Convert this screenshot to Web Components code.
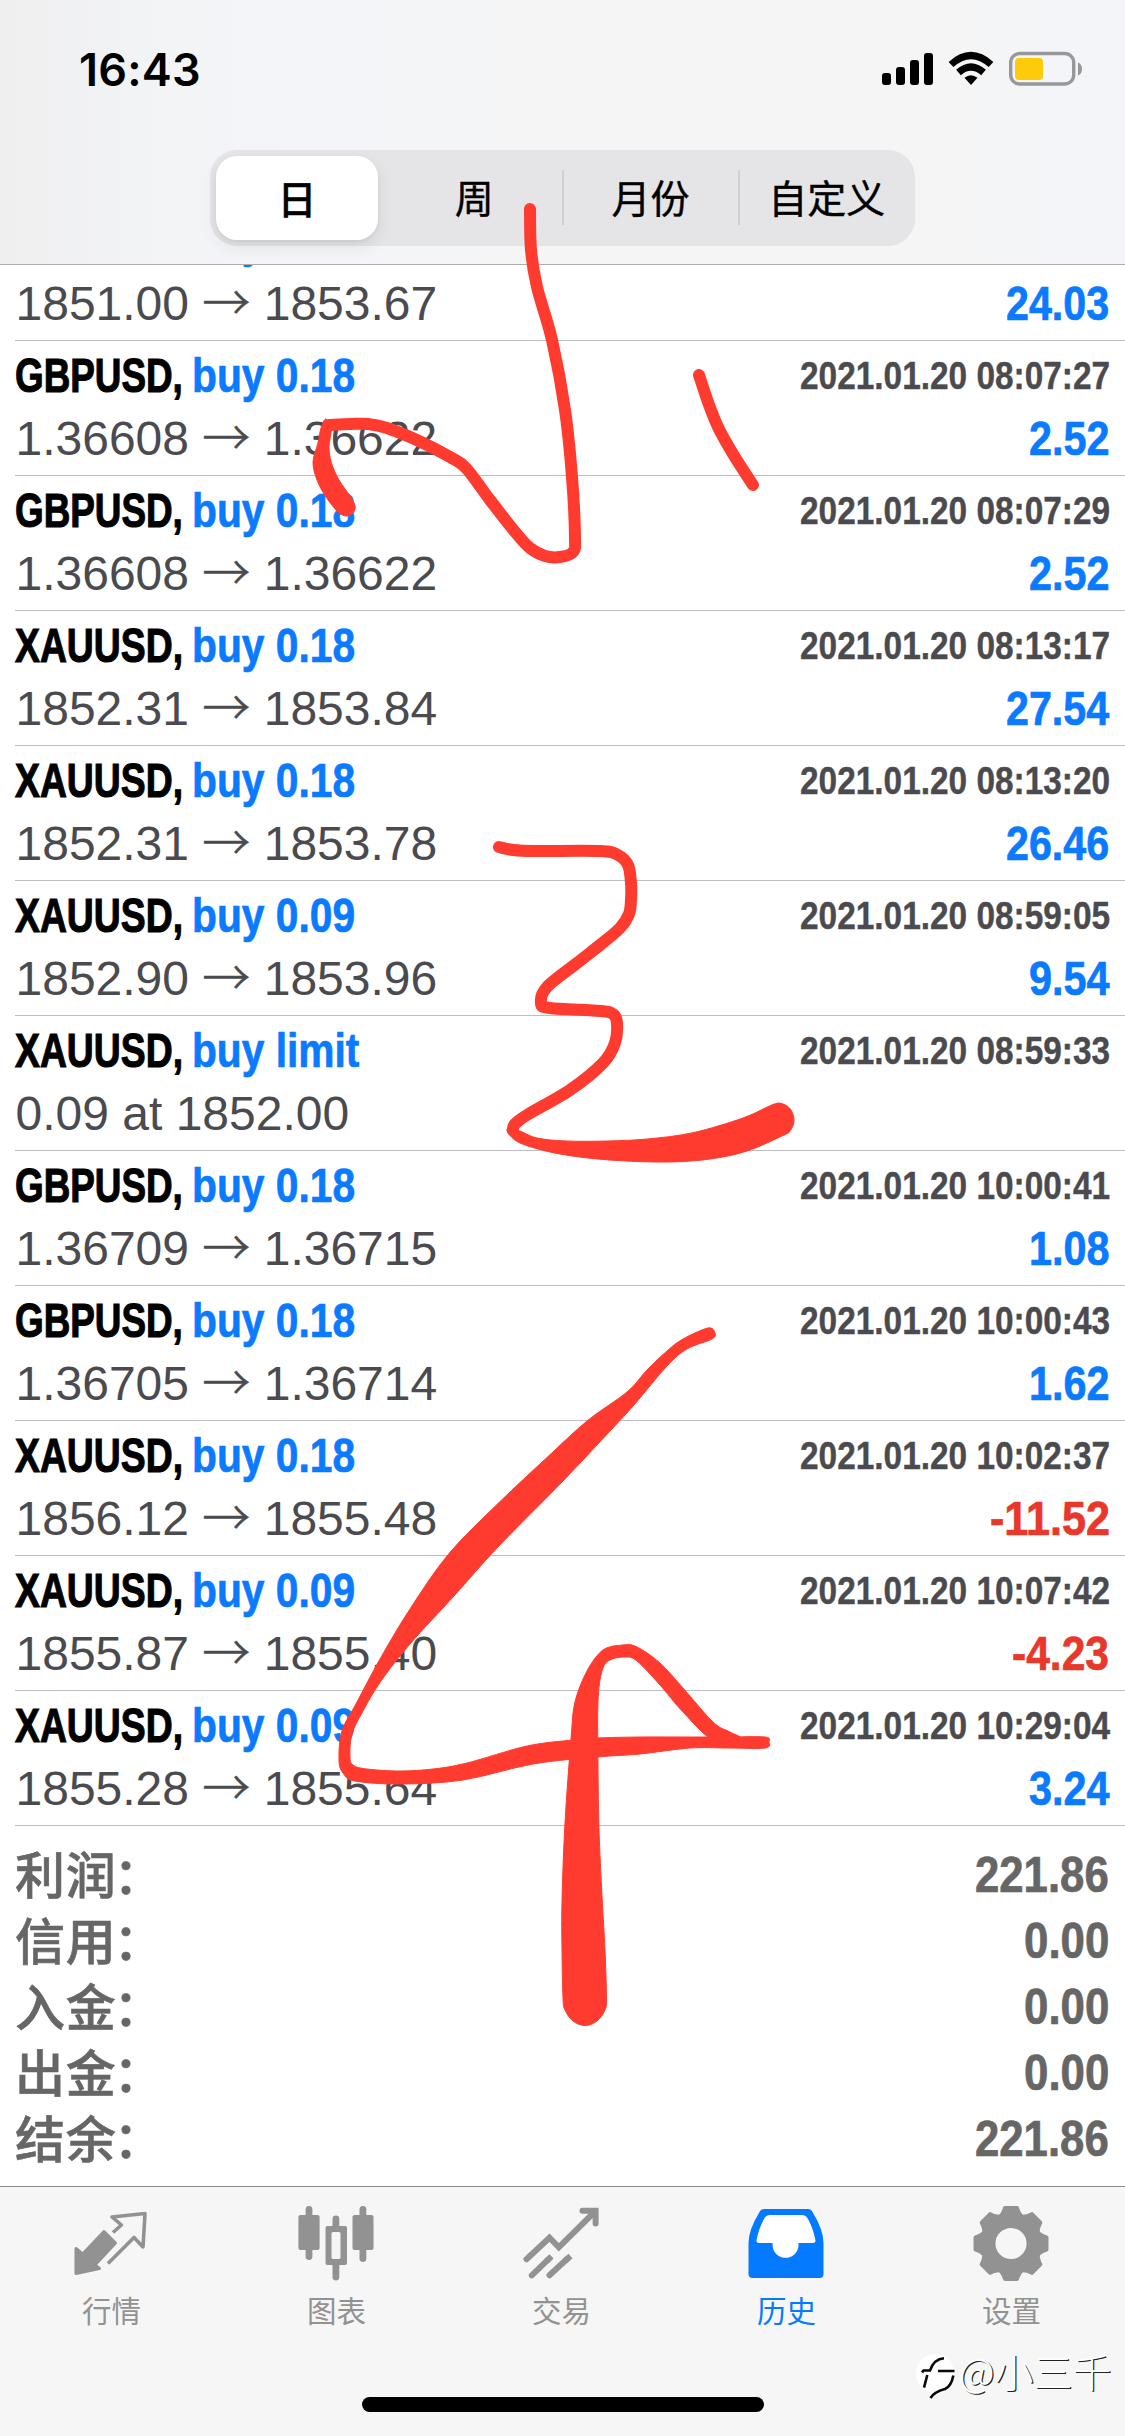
<!DOCTYPE html>
<html lang="zh-CN">
<head>
<meta charset="utf-8">
<title>历史</title>
<style>
html,body{margin:0;background:#fff}
body{width:1125px;height:2436px;overflow:hidden;font-family:"Liberation Sans","Noto Sans CJK SC",sans-serif}
</style>
</head>
<body>
<history-app></history-app>
<script>
const def = (name, html, setup) => customElements.define(name, class extends HTMLElement {
  constructor() { super(); this.attachShadow({ mode: 'open' }); }
  connectedCallback() {
    this.shadowRoot.innerHTML = typeof html === 'function' ? html(this) : html;
    if (setup) setup(this, this.shadowRoot);
  }
});

// Condensed text: squeezes its content horizontally to the width given in "w".
def('fit-text', el => `<style>
:host{display:block;flex:none;width:${el.getAttribute('w')}px;white-space:pre;font-kerning:none}
span{display:inline-block;transform-origin:0 50%;-webkit-text-stroke:var(--ink,.7px) currentColor}
</style><span>${el.getAttribute('text')}</span>`, (el, root) => {
  const s = root.querySelector('span');
  s.style.transform = `scaleX(${el.getAttribute('w') / s.offsetWidth})`;
});

def('status-bar', `<style>
:host{display:flex;height:136px;padding:0 42px 0 79px;align-items:center;justify-content:space-between;box-sizing:border-box}
b{font:600 45px/56px Inter,sans-serif;letter-spacing:.2px;color:#000;display:block;margin-top:3px}
svg{display:block;margin-top:2px}
</style><b>16:43</b>
<svg width="202" height="36" viewBox="881 51 202 36">
<rect x="882" y="73" width="9" height="12" rx="3"/><rect x="896" y="67" width="9" height="18" rx="3"/><rect x="910" y="60" width="9" height="25" rx="3"/><rect x="924" y="53" width="9" height="32" rx="3"/>
<g fill="none" stroke="#000" stroke-width="7"><path d="M951 64.500Q971 46.500 991 64.500"/><path d="M958.500 72.500Q971 61.500 983.500 72.500"/></g>
<path d="M964.500 77.800Q971 72.500 977.500 77.800L971 85Z"/>
<rect x="1010.700" y="53.500" width="63" height="30.500" rx="9" fill="none" stroke="#98989b" stroke-width="3.400"/>
<rect x="1015" y="58" width="28" height="22" rx="4" fill="#fecb0b"/><path d="M1078 62.500Q1082 64 1082 69Q1082 74 1078 75.500Z" fill="#98989b"/>
</svg>`);

def('period-tab', `<style>
:host{display:flex;flex:1;align-items:center;justify-content:center;font:400 39px/56px "Noto Sans CJK SC",sans-serif;color:#000;position:relative}
:host([sep])::before{content:"";position:absolute;left:-1px;top:20px;height:55px;width:2px;background:#cfcfd3}
div{padding-bottom:4px;-webkit-text-stroke:.4px #000}
:host([on]) div{display:flex;align-items:center;justify-content:center;width:162px;height:82px;padding:0 0 2px;background:#fff;border-radius:21px;box-shadow:0 7px 18px rgba(0,0,0,.08),0 2px 4px rgba(0,0,0,.06);margin:0 8px 0 6px;font-weight:500}
</style><div><slot></slot></div>`);

def('period-picker', `<style>
:host{display:flex;width:705px;height:96px;margin:14px 0 0 210px;border-radius:27px;background:#e5e5e7}
</style><slot></slot>`);

def('top-bar', `<style>
:host{display:block;height:265px;border-bottom:1px solid #aeaeb2;box-sizing:border-box;background:linear-gradient(90deg,#efeff0 0,#f3f4f6 170px,#f4f5f9 300px,#f5f5f6 520px,#f5f5f6 960px,#f4f5fa 1125px)}
</style><slot></slot>`);

const glyph = { '.': 11.4, '-': 16.5 };
const valueWidth = v => [...v].reduce((t, c) => t + (glyph[c] || 22.9), 0);

def('deal-row', el => {
  const a = n => el.getAttribute(n) || '';
  return `<style>
:host{display:block;flex:none;height:135px;margin-left:15px;padding-right:15px;box-sizing:border-box;border-bottom:1px solid #bdbdc0}
div{display:flex;justify-content:space-between;align-items:center;line-height:56px}
.top{height:67px;padding-top:2px;box-sizing:border-box}
.bottom{height:62px}
.n{display:flex;gap:9px;font:bold 48px/56px "Liberation Sans",sans-serif}
.s{color:#000;--ink:1.100px}.b{color:#0a7aff}
.t{color:#4a4a4f;font:bold 39px/50px "Liberation Sans",sans-serif;--ink:.4px}
.p{font-size:48px;color:#4a4a4f;white-space:pre;padding-left:.5px}
.p i{font:300 48px/40px "Noto Sans CJK SC";letter-spacing:0;-webkit-text-stroke:.5px currentColor}
.v{color:#0a7aff;margin-right:1px}.v.neg{color:#e8382b}
</style>
<div class="top"><span class="n"><fit-text class="s" w="168" text="${a('symbol')},"></fit-text><fit-text class="b" w="${a('side') === 'buy limit' ? 167 : 163}" text="${a('side')}"></fit-text></span>${a('time') && `<fit-text class="t" w="310" text="${a('time')}"></fit-text>`}</div>
<div class="bottom"><span class="p">${a('price').replace('→', '<i>→</i>')}</span>${a('value') && `<fit-text class="n v ${a('value')[0] === '-' ? 'neg' : ''}" w="${valueWidth(a('value'))}" text="${a('value')}"></fit-text>`}</div>`;
});

def('sum-row', el => `<style>
:host{display:flex;height:66px;padding:0 16px 0 15px;justify-content:space-between;align-items:center;color:#666}
span{font:500 50px/66px "Noto Sans CJK SC",sans-serif;letter-spacing:.8px;margin-top:-7px;-webkit-text-stroke:.6px currentColor}
i{font-style:normal;margin-left:-3px}
fit-text{font:bold 50px/66px "Liberation Sans",sans-serif}
</style><span><slot></slot><i>：</i></span><fit-text w="${valueWidth(el.getAttribute('value')) * 1.0625}" text="${el.getAttribute('value')}"></fit-text>`);

def('tab-item', `<style>
:host{display:flex;flex:1;flex-direction:column;align-items:center;color:#929292;font:400 29.500px/40px "Noto Sans CJK SC",sans-serif}
:host([on]){color:#047aff}
slot[name=icon]{display:block;height:89px;margin-left:1px}
</style><slot name="icon"></slot><span><slot></slot></span>`);

def('tab-bar', `<style>
:host{display:flex;flex-direction:column;height:250px;border-top:1px solid #8c8c8e;box-sizing:border-box;background:#f6f6f6;padding-top:13px}
.tabs{display:flex;height:197px;width:1125px;margin-left:-1px}
.home{width:402px;height:15px;border-radius:8px;background:#000;margin-left:362px}
</style><div class="tabs"><slot></slot></div><div class="home"></div>`);

// Smooth curve through points (Catmull-Rom converted to cubic Beziers).
const curve = (s, closed) => {
  const p = s.trim().split(/\s+/).map(q => q.split(',').map(Number)), n = p.length;
  const at = i => closed ? p[(i + n) % n] : p[Math.max(0, Math.min(n - 1, i))];
  let d = 'M' + p[0];
  for (let i = 0; i < (closed ? n : n - 1); i++) {
    const [a, b, c, e] = [at(i - 1), at(i), at(i + 1), at(i + 2)];
    d += `C${b[0] + (c[0] - a[0]) / 6},${b[1] + (c[1] - a[1]) / 6} ${c[0] - (e[0] - b[0]) / 6},${c[1] - (e[1] - b[1]) / 6} ${c}`;
  }
  return d + (closed ? 'Z' : '');
};
const pens = [
  '530,209 531,250 537,287 552,340 565,410 572,477 575,537 573,552 560,557 545,556 530,548 516,533 490,500 466,468 450,457 419,441 387,428 368,424 351,424 329,425',
  '699,375 708,402 718,427 733,454 753,485',
  '499,847 513,850 535,851 600,851 618,855 628,865 631,883 631,900 629,914 620,928 600,945 577,963 547,987 541,1003 550,1008 600,1011 613,1014 617,1023 615,1043 603,1063 570,1090 527,1115 515,1124 512.700,1130'
];
const fills = [
  '326,419 321,428 318,443 313,462 317,480 326,497 338,512 346,516 353,513 355,506 350,496 339,480 331.500,463 329,447 331,430',
  '507,1130 520,1143 560,1154 610,1160 667,1162 710,1159 747,1151 783,1135.500 790,1131 794,1121 791,1110 783,1104 773,1104.500 743,1118 693,1132.700 647,1139 607,1141 567,1141 537,1138 519,1130.700',
  '708,1328 683,1339 667,1351 647,1370 627,1392 587,1421 547,1457.500 499,1502.600 449,1553.500 410,1609 380,1659 357,1702 342,1731 339,1760 343,1773 355,1781 400,1784 463,1780 533,1764 597,1757 640,1754 690,1748 727,1748 765,1748 769,1742 765,1737 727,1737 690,1737 640,1737 597,1738 573,1740 527,1746 467,1763 433,1769 400,1771 367,1769 353,1765 350,1756 352,1734 363,1711 381,1681 410,1644 454,1596 498,1547 563,1481 611,1430 634,1405 667,1366 687,1349 712,1339 715,1333',
  '562,1950 563,1998 565,2010 573,2021 585,2025.500 597,2021 605,2010 606.500,1998 605,1950 602,1896 599,1830 598,1765 598,1702 602,1671 610,1660 625,1657 637,1661 660,1685 683,1712 713,1740 740,1738 730,1732 713,1722 683,1688 660,1663 637,1647 623,1645 603,1650 587,1671 575,1702 571,1739 565,1823 562,1901'
];
def('ink-layer', `<style>:host{position:absolute;left:0;top:0;pointer-events:none}svg{display:block}</style>
<svg width="1125" height="2436">${pens.map(s => `<path d="${curve(s)}" fill="none" stroke="#ff3b30" stroke-width="12" stroke-linecap="round" stroke-linejoin="round"/>`).join('')}${fills.map(s => `<path d="${curve(s, true)}" fill="#ff3b30" stroke="#ff3b30" stroke-width="1" stroke-linejoin="round"/>`).join('')}</svg>`);

def('author-mark', `<style>
:host{position:absolute;left:914px;top:2347px;display:flex;align-items:center;color:#fff;font:300 39px/50px "Noto Sans CJK SC",sans-serif}
svg{display:block;margin-right:1px}
span{text-shadow:1.200px 1.200px 0 #222;margin-top:-9px}
</style><svg width="44" height="54" viewBox="0 0 44 54"><path d="M21 7A19 19 0 0 1 40 26Q39 42 28 46L16 53V45Q2 41 2 26A19 19 0 0 1 21 7Z" fill="#fff"/>
<g fill="none" stroke="#0a0a0a" stroke-width="2.600"><path d="M8 25.500L9.500 23.500H16Q20 12 30 11.300M13.300 28L10 40.700"/><path d="M24 24H40.500M39.300 28.500Q37.500 39 31 42Q20 45 16.500 51"/></g></svg><span>@小三千</span>`);

const teeth = Array.from({ length: 8 }, (_, i) => `<path transform="rotate(${i * 45})" d="M-12 -26Q-8 -29 -6 -35.500H6Q8 -29 12 -26Z"/>`).join('');
const icons = {
  quotes: `<g stroke-linejoin="round" stroke="currentColor"><path fill="currentColor" stroke-width="3" d="M34 31.500L45.500 43L25 65L29.500 68.500L6 73.500V48.500L12.700 54Z"/><path fill="none" stroke-width="3.600" d="M43 32.500L51.400 25L42 17L75 13.500L73 47L64 37.500L38 63.500"/></g>`,
  chart: `<g fill="currentColor"><rect x="3.400" y="15" width="21.200" height="35" rx="2"/><rect x="10.600" y="6" width="6.800" height="54" rx="3.400"/><rect x="57.500" y="15" width="21" height="35" rx="2"/><rect x="64.500" y="6" width="6.800" height="56" rx="3.400"/><path fill-rule="evenodd" d="M32.500 26H50a2 2 0 0 1 2 2V63a2 2 0 0 1-2 2H32.500a2 2 0 0 1-2-2V28a2 2 0 0 1 2-2ZM38 32a1.500 1.500 0 0 0-1.500 1.500V57.500A1.500 1.500 0 0 0 38 59H44a1.500 1.500 0 0 0 1.500-1.500V33.500A1.500 1.500 0 0 0 44 32Z"/><path d="M37.500 27V19a3.400 3.400 0 0 1 6.800 0V27ZM37.500 64V77a3.400 3.400 0 0 0 6.800 0V64Z"/></g>`,
  trade: `<g fill="none" stroke="currentColor" stroke-width="6" stroke-linecap="round"><path d="M6.500 59.300L29.500 37.700L38.800 47.300L75 11.500"/><path d="M62.500 10.800H75.600V23.500"/><path d="M11.800 75.300L28 59.700M29.500 75.300L47 59"/><path stroke-linecap="butt" d="M26 61.600L31.500 56.400M45 61L50.500 56"/></g>`,
  history: `<path fill="#fff" d="M19 12H63L74 46H56L40 62L24 46H9Z"/><path fill="currentColor" fill-rule="evenodd" d="M19 9H63Q66 9 67.500 12Q78.500 30 78.500 43V74Q78.500 78 74.500 78H7.500Q3.500 78 3.500 74V43Q3.500 30 14.500 12Q16 9 19 9ZM25 15Q21 15 19 19Q14 28 11.500 40Q11 43 14 43H27.600V46A13 13 0 0 0 53.500 46V43H68Q71 43 70.400 40Q68 28 63 19Q61 15 57 15Z"/>`,
  settings: `<g transform="translate(41 43.500)" fill="currentColor" stroke="currentColor" stroke-width="4" stroke-linejoin="round">${teeth}<circle r="22.300" fill="none" stroke-width="13.500"/></g>`
};
def('tab-icon', el => `<style>:host{display:block}svg{display:block}</style><svg width="84" height="84" viewBox="0 0 84 84">${icons[el.getAttribute('name')]}</svg>`);

const deals = [
  ['XAUUSD', 'buy 0.09', '', '1851.00 → 1853.67', '24.03'],
  ['GBPUSD', 'buy 0.18', '08:07:27', '1.36608 → 1.36622', '2.52'],
  ['GBPUSD', 'buy 0.18', '08:07:29', '1.36608 → 1.36622', '2.52'],
  ['XAUUSD', 'buy 0.18', '08:13:17', '1852.31 → 1853.84', '27.54'],
  ['XAUUSD', 'buy 0.18', '08:13:20', '1852.31 → 1853.78', '26.46'],
  ['XAUUSD', 'buy 0.09', '08:59:05', '1852.90 → 1853.96', '9.54'],
  ['XAUUSD', 'buy limit', '08:59:33', '0.09 at 1852.00', ''],
  ['GBPUSD', 'buy 0.18', '10:00:41', '1.36709 → 1.36715', '1.08'],
  ['GBPUSD', 'buy 0.18', '10:00:43', '1.36705 → 1.36714', '1.62'],
  ['XAUUSD', 'buy 0.18', '10:02:37', '1856.12 → 1855.48', '-11.52'],
  ['XAUUSD', 'buy 0.09', '10:07:42', '1855.87 → 1855.40', '-4.23'],
  ['XAUUSD', 'buy 0.09', '10:29:04', '1855.28 → 1855.64', '3.24']
];
const sums = [['利润', '221.86'], ['信用', '0.00'], ['入金', '0.00'], ['出金', '0.00'], ['结余', '221.86']];
const tabs = [['quotes', '行情'], ['chart', '图表'], ['trade', '交易'], ['history', '历史'], ['settings', '设置']];

def('history-app', `<style>
:host{display:flex;flex-direction:column;width:1125px;height:2436px;position:relative;background:#fff;overflow:hidden}
top-bar,tab-bar{flex:none}
main{flex:1;overflow:hidden;display:flex;flex-direction:column;justify-content:flex-start}
deal-row:first-child{margin-top:-59px}
.sums{padding-top:16px}
</style>
<top-bar><status-bar></status-bar><period-picker><period-tab on>日</period-tab><period-tab>周</period-tab><period-tab sep>月份</period-tab><period-tab sep>自定义</period-tab></period-picker></top-bar>
<main>${deals.map(d => `<deal-row symbol="${d[0]}" side="${d[1]}" time="${d[2] && '2021.01.20 ' + d[2]}" price="${d[3]}" value="${d[4]}"></deal-row>`).join('')}
<div class="sums">${sums.map(s => `<sum-row value="${s[1]}">${s[0]}</sum-row>`).join('')}</div></main>
<tab-bar>${tabs.map(t => `<tab-item${t[0] === 'history' ? ' on' : ''}><tab-icon slot="icon" name="${t[0]}"></tab-icon>${t[1]}</tab-item>`).join('')}</tab-bar>
<ink-layer></ink-layer><author-mark></author-mark>`);
</script>
</body>
</html>
